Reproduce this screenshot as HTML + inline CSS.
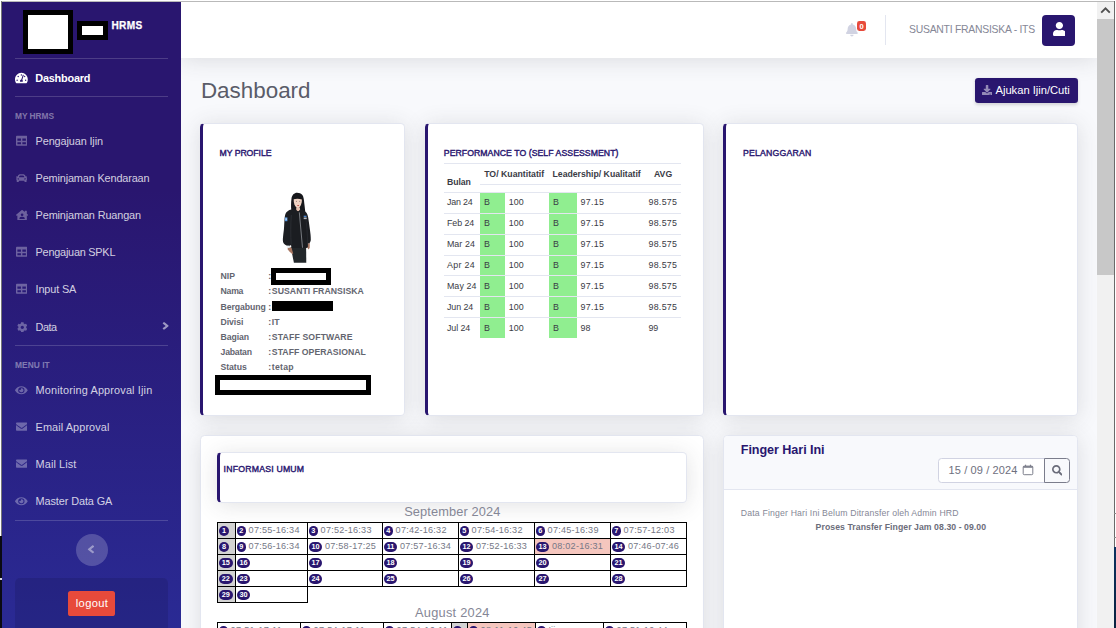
<!DOCTYPE html>
<html lang="id">
<head>
<meta charset="utf-8">
<title>Dashboard - HRMS</title>
<style>
*{box-sizing:border-box;margin:0;padding:0}
html,body{width:1116px;height:628px;overflow:hidden;background:#f8f9fc}
body{font-family:"Liberation Sans",sans-serif;color:#858796;position:relative;-webkit-font-smoothing:antialiased}
#page{position:absolute;left:0;top:0;width:1116px;height:628px;overflow:hidden;background:#f8f9fc}
.abs{position:absolute}
.t{position:absolute;white-space:nowrap;line-height:1}

/* ---------- sidebar ---------- */
#sidebar{position:absolute;left:2px;top:2px;width:179px;height:626px;background:linear-gradient(180deg,#29166f 0%,#29166f 30%,#2a2a94 100%)}
.sdiv{position:absolute;left:13px;width:153px;height:1px;background:rgba(255,255,255,.15)}
.shead{position:absolute;left:13px;font-size:8.3px;font-weight:bold;color:rgba(255,255,255,.4);letter-spacing:.1px;white-space:nowrap;line-height:1}
.nav{position:absolute;left:33.5px;font-size:10.9px;color:rgba(255,255,255,.8);white-space:nowrap;line-height:1}
.nav.act{color:#fff;font-weight:bold}
.ico{position:absolute;fill:rgba(255,255,255,.3)}

/* ---------- topbar ---------- */
#topbar{position:absolute;left:181px;top:2px;width:916px;height:56px;background:#fff;box-shadow:0 2.4px 22.4px 0 rgba(58,59,69,.15)}

/* ---------- cards ---------- */
.card{position:absolute;background:#fff;border:1px solid #e3e6f0;border-radius:4.5px;box-shadow:0 2.4px 22.4px 0 rgba(58,59,69,.15)}
.card.bl{border-left:3.4px solid #29166f}
.ctitle{position:absolute;font-size:8.96px;font-weight:bold;color:#29166f;white-space:nowrap;line-height:1}
</style>
</head>
<body>
<div id="page">

<!-- ======= MAIN CONTENT (placed first so sidebar/topbar overlay shadows) ======= -->
<div id="content">
<div class="t" style="left:200.90px;top:80.00px;font-size:22.4px;letter-spacing:0.012px;color:#5a5c69;">Dashboard</div>
<div class="abs" style="left:975px;top:78px;width:103px;height:25px;border-radius:3.2px;background:#29166f;box-shadow:0 1.6px 3.2px rgba(58,59,69,.2)"></div>
<svg class="abs" style="left:982.0px;top:85.0px" width="10.1" height="10.1" viewBox="0 0 512 512" preserveAspectRatio="none"><path fill="rgba(255,255,255,.5)" d="M216 0h80c13.3 0 24 10.7 24 24v168h87.7c17.8 0 26.7 21.5 14.1 34.1L269.7 378.3c-7.5 7.5-19.8 7.5-27.3 0L90.1 226.1c-12.6-12.6-3.7-34.1 14.1-34.1H192V24c0-13.3 10.7-24 24-24zm296 376v112c0 13.3-10.7 24-24 24H24c-13.3 0-24-10.7-24-24V376c0-13.3 10.7-24 24-24h146.7l49 49c20.1 20.1 52.5 20.1 72.6 0l49-49H488c13.3 0 24 10.7 24 24zm-124 88c0-11-9-20-20-20s-20 9-20 20 9 20 20 20 20-9 20-20zm64 0c0-11-9-20-20-20s-20 9-20 20 9 20 20 20 20-9 20-20z"/></svg>
<div class="t" style="left:995.50px;top:85.00px;font-size:11.2px;letter-spacing:-0.020px;color:#fff;">Ajukan Ijin/Cuti</div>
<div class="card bl" style="left:200px;top:123px;width:204.5px;height:292.5px"></div>
<div class="t" style="left:219.60px;top:149.00px;font-size:8.7px;letter-spacing:-0.067px;color:#29166f;-webkit-text-stroke:0.4px;">MY PROFILE</div>
<svg class="abs" style="left:276px;top:188px;filter:blur(.4px)" width="44" height="80" viewBox="276 188 44 80">
<path d="M297.1 192.7 C294.2 192.7 291.9 195 291.5 198.6 C291 202.4 290.9 207 291.3 210 C291.4 211.6 291.5 212.8 291.9 213.6 L305.4 213.6 C305.2 210.6 304.7 207 304.3 203.6 C304 199.6 303.6 196.8 302.4 195 C301.1 193.4 299.2 192.7 297.1 192.7 Z" fill="#16171b"/>
<path d="M293.7 199.3 C293.5 203.2 294.6 206.6 297.7 208.7 C300.5 207.1 302.1 203.4 301.9 199.5 C299.5 198.5 296 198.3 293.7 199.3 Z" fill="#efd2c3"/>
<path d="M296.3 207.4 L299.9 207.4 L300.2 211.2 L296.0 211.2 Z" fill="#e5bfad"/>
<ellipse cx="298.1" cy="205.4" rx="1.0" ry=".5" fill="#c0453f"/>
<circle cx="296.3" cy="201.3" r=".45" fill="#3a2a28"/><circle cx="299.8" cy="201.3" r=".45" fill="#3a2a28"/>
<path d="M290.8 247.2 L306.1 247.2 L306.3 262.7 L293.9 262.7 Z" fill="#22272a"/>
<path d="M287.6 247.4 C288.8 246.6 290.6 246.8 291.6 248 L293.2 253.4 L292.2 254 L289.6 251.8 L287.8 249.6 Z" fill="#a87762"/>
<path d="M307.4 243.4 L309.8 243.2 L309.7 248 L308.4 249.6 L307.3 247.2 Z" fill="#a87762"/>
<path d="M290.1 209.7 C291.8 209.0 294.4 209.0 296.0 209.6 L298.1 211.8 L300.1 209.6 C302.4 209.8 304.6 210.9 306.0 212.3 C307.2 213.6 307.8 215.4 308.2 217.6 C308.8 221.6 309.4 225.8 309.9 229.5 C310.4 233 310.9 236.6 310.8 240 C310.6 241.6 310.0 242.8 309.2 243.4 L307.9 243.2 L307.9 246.2 C307.9 247.2 307.3 247.8 306.4 247.9 L291.6 248 C291.2 247 291.1 245.8 291.0 244.8 L289.4 246.6 C287.6 246.2 285.4 245.2 284.0 243.8 C283.0 242.6 282.7 240.4 282.9 238.4 C283.1 235.4 283.5 232.4 283.9 229.5 C284.2 225.6 284.3 221.6 284.6 218.4 C284.9 215.8 285.4 213.8 286.2 212.6 C287.2 211.2 288.6 210.3 290.1 209.7 Z" fill="#1b1d21"/>
<path d="M299.3 212.3 L302.5 247.7" stroke="#8f9399" stroke-width=".8" fill="none"/>
<path d="M291.3 215 C290.6 224 290.6 236 291.2 244.6" stroke="#303339" stroke-width=".7" fill="none"/>
<path d="M305.6 216 C306.6 224 307.4 234 307.8 243" stroke="#2c2f35" stroke-width=".6" fill="none"/>
<rect x="284.9" y="217.4" width="2.5" height="3.8" fill="#5c9ae0"/>
<rect x="285.6" y="218.4" width="1.1" height="1.6" fill="#c9def5"/>
<rect x="303.7" y="215.7" width="2.8" height="1.2" fill="#4f8fdc"/>
<rect x="303.7" y="217.5" width="3.0" height="1.6" fill="#b4b9c4"/>
<rect x="286.9" y="245.6" width="2.9" height="2.3" fill="#e8f0f4"/>
</svg>
<div class="t" style="left:220.60px;top:272.00px;font-size:8.7px;color:#63656f;font-weight:bold;">NIP</div>
<div class="t" style="left:268.20px;top:272.00px;font-size:8.7px;color:#63656f;font-weight:bold;">:</div>
<div class="t" style="left:220.60px;top:287.00px;font-size:8.7px;letter-spacing:-0.267px;color:#63656f;font-weight:bold;">Nama</div>
<div class="t" style="left:268.20px;top:287.00px;font-size:8.7px;color:#63656f;font-weight:bold;">:</div>
<div class="t" style="left:271.80px;top:287.00px;font-size:8.7px;letter-spacing:0.050px;color:#63656f;font-weight:bold;">SUSANTI FRANSISKA</div>
<div class="t" style="left:220.60px;top:303.00px;font-size:8.7px;letter-spacing:-0.075px;color:#63656f;font-weight:bold;">Bergabung</div>
<div class="t" style="left:268.20px;top:303.00px;font-size:8.7px;color:#63656f;font-weight:bold;">:</div>
<div class="t" style="left:220.60px;top:318.00px;font-size:8.7px;letter-spacing:-0.080px;color:#63656f;font-weight:bold;">Divisi</div>
<div class="t" style="left:268.20px;top:318.00px;font-size:8.7px;color:#63656f;font-weight:bold;">:</div>
<div class="t" style="left:271.80px;top:318.00px;font-size:8.7px;color:#63656f;font-weight:bold;">IT</div>
<div class="t" style="left:220.60px;top:333.00px;font-size:8.7px;letter-spacing:-0.080px;color:#63656f;font-weight:bold;">Bagian</div>
<div class="t" style="left:268.20px;top:333.00px;font-size:8.7px;color:#63656f;font-weight:bold;">:</div>
<div class="t" style="left:271.80px;top:333.00px;font-size:8.7px;letter-spacing:0.138px;color:#63656f;font-weight:bold;">STAFF SOFTWARE</div>
<div class="t" style="left:220.60px;top:348.00px;font-size:8.7px;letter-spacing:-0.233px;color:#63656f;font-weight:bold;">Jabatan</div>
<div class="t" style="left:268.20px;top:348.00px;font-size:8.7px;color:#63656f;font-weight:bold;">:</div>
<div class="t" style="left:271.80px;top:348.00px;font-size:8.7px;letter-spacing:0.037px;color:#63656f;font-weight:bold;">STAFF OPERASIONAL</div>
<div class="t" style="left:220.60px;top:363.00px;font-size:8.7px;letter-spacing:-0.080px;color:#63656f;font-weight:bold;">Status</div>
<div class="t" style="left:268.20px;top:363.00px;font-size:8.7px;color:#63656f;font-weight:bold;">:</div>
<div class="t" style="left:271.80px;top:363.00px;font-size:8.7px;letter-spacing:0.250px;color:#63656f;font-weight:bold;">tetap</div>
<div class="abs" style="left:271px;top:268px;width:60px;height:16.7px;background:#000"></div>
<div class="abs" style="left:276px;top:273px;width:50px;height:6.8px;background:#fff"></div>
<div class="abs" style="left:271.8px;top:301.2px;width:61.2px;height:9.5px;background:#000"></div>
<div class="abs" style="left:215px;top:375.2px;width:156px;height:19.7px;background:#000"></div>
<div class="abs" style="left:220px;top:380px;width:146px;height:9.9px;background:#fff"></div>
<div class="card bl" style="left:425px;top:123px;width:278.5px;height:292.5px"></div>
<div class="t" style="left:443.80px;top:149.00px;font-size:8.7px;letter-spacing:0.052px;color:#29166f;-webkit-text-stroke:0.4px;">PERFORMANCE TO (SELF ASSESSMENT)</div>
<div class="abs" style="left:444px;top:163px;width:236.8px;height:1px;background:#e3e6f0"></div>
<div class="abs" style="left:479.8px;top:184px;width:201px;height:1px;background:#e3e6f0"></div>
<div class="t" style="left:484.20px;top:170.00px;font-size:8.7px;letter-spacing:0.021px;color:#3a3b45;font-weight:bold;">TO/ Kuantitatif</div>
<div class="t" style="left:552.50px;top:170.00px;font-size:8.7px;letter-spacing:-0.005px;color:#3a3b45;font-weight:bold;">Leadership/ Kualitatif</div>
<div class="t" style="left:653.90px;top:170.00px;font-size:8.7px;letter-spacing:0.050px;color:#3a3b45;font-weight:bold;">AVG</div>
<div class="t" style="left:447.00px;top:178.00px;font-size:8.7px;letter-spacing:-0.075px;color:#3a3b45;font-weight:bold;">Bulan</div>
<div class="abs" style="left:444px;top:192px;width:236.8px;height:1px;background:#e3e6f0"></div>
<div class="abs" style="left:479.8px;top:193px;width:25px;height:20px;background:#90ee90"></div>
<div class="abs" style="left:548.9px;top:193px;width:28.1px;height:20px;background:#90ee90"></div>
<div class="t" style="left:446.90px;top:198.00px;font-size:8.9px;letter-spacing:-0.180px;color:#3a3b45;">Jan 24</div>
<div class="t" style="left:484.10px;top:198.00px;font-size:8.9px;color:#3a3b45;">B</div>
<div class="t" style="left:508.80px;top:198.00px;font-size:8.9px;letter-spacing:0.050px;color:#3a3b45;">100</div>
<div class="t" style="left:552.90px;top:198.00px;font-size:8.9px;color:#3a3b45;">B</div>
<div class="t" style="left:580.50px;top:198.00px;font-size:8.9px;letter-spacing:0.300px;color:#3a3b45;">97.15</div>
<div class="t" style="left:648.40px;top:198.00px;font-size:8.9px;letter-spacing:0.300px;color:#3a3b45;">98.575</div>
<div class="abs" style="left:444px;top:213px;width:236.8px;height:1px;background:#e3e6f0"></div>
<div class="abs" style="left:479.8px;top:214px;width:25px;height:20px;background:#90ee90"></div>
<div class="abs" style="left:548.9px;top:214px;width:28.1px;height:20px;background:#90ee90"></div>
<div class="t" style="left:446.90px;top:219.00px;font-size:8.9px;letter-spacing:-0.060px;color:#3a3b45;">Feb 24</div>
<div class="t" style="left:484.10px;top:219.00px;font-size:8.9px;color:#3a3b45;">B</div>
<div class="t" style="left:508.80px;top:219.00px;font-size:8.9px;letter-spacing:0.050px;color:#3a3b45;">100</div>
<div class="t" style="left:552.90px;top:219.00px;font-size:8.9px;color:#3a3b45;">B</div>
<div class="t" style="left:580.50px;top:219.00px;font-size:8.9px;letter-spacing:0.300px;color:#3a3b45;">97.15</div>
<div class="t" style="left:648.40px;top:219.00px;font-size:8.9px;letter-spacing:0.300px;color:#3a3b45;">98.575</div>
<div class="abs" style="left:444px;top:234px;width:236.8px;height:1px;background:#e3e6f0"></div>
<div class="abs" style="left:479.8px;top:235px;width:25px;height:20px;background:#90ee90"></div>
<div class="abs" style="left:548.9px;top:235px;width:28.1px;height:20px;background:#90ee90"></div>
<div class="t" style="left:446.90px;top:240.00px;font-size:8.9px;letter-spacing:0.060px;color:#3a3b45;">Mar 24</div>
<div class="t" style="left:484.10px;top:240.00px;font-size:8.9px;color:#3a3b45;">B</div>
<div class="t" style="left:508.80px;top:240.00px;font-size:8.9px;letter-spacing:0.050px;color:#3a3b45;">100</div>
<div class="t" style="left:552.90px;top:240.00px;font-size:8.9px;color:#3a3b45;">B</div>
<div class="t" style="left:580.50px;top:240.00px;font-size:8.9px;letter-spacing:0.300px;color:#3a3b45;">97.15</div>
<div class="t" style="left:648.40px;top:240.00px;font-size:8.9px;letter-spacing:0.300px;color:#3a3b45;">98.575</div>
<div class="abs" style="left:444px;top:255px;width:236.8px;height:1px;background:#e3e6f0"></div>
<div class="abs" style="left:479.8px;top:256px;width:25px;height:19px;background:#90ee90"></div>
<div class="abs" style="left:548.9px;top:256px;width:28.1px;height:19px;background:#90ee90"></div>
<div class="t" style="left:446.90px;top:261.00px;font-size:8.9px;letter-spacing:0.340px;color:#3a3b45;">Apr 24</div>
<div class="t" style="left:484.10px;top:261.00px;font-size:8.9px;color:#3a3b45;">B</div>
<div class="t" style="left:508.80px;top:261.00px;font-size:8.9px;letter-spacing:0.050px;color:#3a3b45;">100</div>
<div class="t" style="left:552.90px;top:261.00px;font-size:8.9px;color:#3a3b45;">B</div>
<div class="t" style="left:580.50px;top:261.00px;font-size:8.9px;letter-spacing:0.300px;color:#3a3b45;">97.15</div>
<div class="t" style="left:648.40px;top:261.00px;font-size:8.9px;letter-spacing:0.300px;color:#3a3b45;">98.575</div>
<div class="abs" style="left:444px;top:275px;width:236.8px;height:1px;background:#e3e6f0"></div>
<div class="abs" style="left:479.8px;top:276px;width:25px;height:20px;background:#90ee90"></div>
<div class="abs" style="left:548.9px;top:276px;width:28.1px;height:20px;background:#90ee90"></div>
<div class="t" style="left:446.90px;top:282.00px;font-size:8.9px;letter-spacing:0.080px;color:#3a3b45;">May 24</div>
<div class="t" style="left:484.10px;top:282.00px;font-size:8.9px;color:#3a3b45;">B</div>
<div class="t" style="left:508.80px;top:282.00px;font-size:8.9px;letter-spacing:0.050px;color:#3a3b45;">100</div>
<div class="t" style="left:552.90px;top:282.00px;font-size:8.9px;color:#3a3b45;">B</div>
<div class="t" style="left:580.50px;top:282.00px;font-size:8.9px;letter-spacing:0.300px;color:#3a3b45;">97.15</div>
<div class="t" style="left:648.40px;top:282.00px;font-size:8.9px;letter-spacing:0.300px;color:#3a3b45;">98.575</div>
<div class="abs" style="left:444px;top:296px;width:236.8px;height:1px;background:#e3e6f0"></div>
<div class="abs" style="left:479.8px;top:297px;width:25px;height:20px;background:#90ee90"></div>
<div class="abs" style="left:548.9px;top:297px;width:28.1px;height:20px;background:#90ee90"></div>
<div class="t" style="left:446.90px;top:303.00px;font-size:8.9px;letter-spacing:-0.060px;color:#3a3b45;">Jun 24</div>
<div class="t" style="left:484.10px;top:303.00px;font-size:8.9px;color:#3a3b45;">B</div>
<div class="t" style="left:508.80px;top:303.00px;font-size:8.9px;letter-spacing:0.050px;color:#3a3b45;">100</div>
<div class="t" style="left:552.90px;top:303.00px;font-size:8.9px;color:#3a3b45;">B</div>
<div class="t" style="left:580.50px;top:303.00px;font-size:8.9px;letter-spacing:0.300px;color:#3a3b45;">97.15</div>
<div class="t" style="left:648.40px;top:303.00px;font-size:8.9px;letter-spacing:0.300px;color:#3a3b45;">98.575</div>
<div class="abs" style="left:444px;top:317px;width:236.8px;height:1px;background:#e3e6f0"></div>
<div class="abs" style="left:479.8px;top:318px;width:25px;height:20px;background:#90ee90"></div>
<div class="abs" style="left:548.9px;top:318px;width:28.1px;height:20px;background:#90ee90"></div>
<div class="t" style="left:446.90px;top:324.00px;font-size:8.9px;letter-spacing:-0.060px;color:#3a3b45;">Jul 24</div>
<div class="t" style="left:484.10px;top:324.00px;font-size:8.9px;color:#3a3b45;">B</div>
<div class="t" style="left:508.80px;top:324.00px;font-size:8.9px;letter-spacing:0.050px;color:#3a3b45;">100</div>
<div class="t" style="left:552.90px;top:324.00px;font-size:8.9px;color:#3a3b45;">B</div>
<div class="t" style="left:580.50px;top:324.00px;font-size:8.9px;color:#3a3b45;">98</div>
<div class="t" style="left:648.40px;top:324.00px;font-size:8.9px;color:#3a3b45;">99</div>
<div class="card bl" style="left:723px;top:123px;width:354.5px;height:292.5px"></div>
<div class="t" style="left:742.90px;top:149.00px;font-size:8.7px;letter-spacing:0.220px;color:#29166f;-webkit-text-stroke:0.4px;">PELANGGARAN</div>
<div class="card" style="left:200px;top:435px;width:503.5px;height:260px"></div>
<div class="card bl" style="left:217px;top:452px;width:469.5px;height:51px"></div>
<div class="t" style="left:223.60px;top:465.00px;font-size:8.7px;letter-spacing:0.215px;color:#29166f;-webkit-text-stroke:0.4px;">INFORMASI UMUM</div>
<div class="t" style="left:404.20px;top:506.00px;font-size:12.8px;letter-spacing:0.115px;color:#858796;">September 2024</div>
<div class="t" style="left:415.00px;top:607.00px;font-size:12.8px;letter-spacing:0.260px;color:#858796;">August 2024</div>
<div class="abs" style="left:218px;top:523px;width:17px;height:15px;background:#d3d3d3"></div>
<div class="abs" style="left:218px;top:539px;width:17px;height:15px;background:#d3d3d3"></div>
<div class="abs" style="left:218px;top:555px;width:17px;height:15px;background:#d3d3d3"></div>
<div class="abs" style="left:218px;top:571px;width:17px;height:15px;background:#d3d3d3"></div>
<div class="abs" style="left:218px;top:587px;width:17px;height:15px;background:#d3d3d3"></div>
<div class="abs" style="left:535px;top:539px;width:75px;height:15px;background:#f5c6be"></div>
<div class="abs" style="left:217px;top:522px;width:470px;height:1px;background:#000"></div>
<div class="abs" style="left:217px;top:538px;width:470px;height:1px;background:#000"></div>
<div class="abs" style="left:217px;top:554px;width:470px;height:1px;background:#000"></div>
<div class="abs" style="left:217px;top:570px;width:470px;height:1px;background:#000"></div>
<div class="abs" style="left:217px;top:586px;width:470px;height:1px;background:#000"></div>
<div class="abs" style="left:217px;top:602px;width:91px;height:1px;background:#000"></div>
<div class="abs" style="left:217px;top:522px;width:1px;height:81px;background:#000"></div>
<div class="abs" style="left:235px;top:522px;width:1px;height:81px;background:#000"></div>
<div class="abs" style="left:307px;top:522px;width:1px;height:81px;background:#000"></div>
<div class="abs" style="left:382px;top:522px;width:1px;height:65px;background:#000"></div>
<div class="abs" style="left:458px;top:522px;width:1px;height:65px;background:#000"></div>
<div class="abs" style="left:534px;top:522px;width:1px;height:65px;background:#000"></div>
<div class="abs" style="left:610px;top:522px;width:1px;height:65px;background:#000"></div>
<div class="abs" style="left:686px;top:522px;width:1px;height:65px;background:#000"></div>
<div class="abs" style="left:218.80px;top:525.80px;width:10.4px;height:10.2px;border-radius:5.1px;background:#29166f"></div><div class="t" style="left:221.97px;top:527.00px;font-size:7.3px;color:#fff;font-weight:bold;">1</div>
<div class="abs" style="left:236.90px;top:525.80px;width:8.9px;height:10.2px;border-radius:5.1px;background:#29166f"></div><div class="t" style="left:239.32px;top:527.00px;font-size:7.3px;color:#fff;font-weight:bold;">2</div>
<div class="t" style="left:248.60px;top:526.00px;font-size:9.1px;letter-spacing:0.230px;color:#757786;">07:55-16:34</div>
<div class="abs" style="left:308.90px;top:525.80px;width:8.9px;height:10.2px;border-radius:5.1px;background:#29166f"></div><div class="t" style="left:311.32px;top:527.00px;font-size:7.3px;color:#fff;font-weight:bold;">3</div>
<div class="t" style="left:320.60px;top:526.00px;font-size:9.1px;letter-spacing:0.230px;color:#757786;">07:52-16:33</div>
<div class="abs" style="left:383.90px;top:525.80px;width:8.9px;height:10.2px;border-radius:5.1px;background:#29166f"></div><div class="t" style="left:386.32px;top:527.00px;font-size:7.3px;color:#fff;font-weight:bold;">4</div>
<div class="t" style="left:395.60px;top:526.00px;font-size:9.1px;letter-spacing:0.230px;color:#757786;">07:42-16:32</div>
<div class="abs" style="left:459.90px;top:525.80px;width:8.9px;height:10.2px;border-radius:5.1px;background:#29166f"></div><div class="t" style="left:462.32px;top:527.00px;font-size:7.3px;color:#fff;font-weight:bold;">5</div>
<div class="t" style="left:471.60px;top:526.00px;font-size:9.1px;letter-spacing:0.230px;color:#757786;">07:54-16:32</div>
<div class="abs" style="left:535.90px;top:525.80px;width:8.9px;height:10.2px;border-radius:5.1px;background:#29166f"></div><div class="t" style="left:538.32px;top:527.00px;font-size:7.3px;color:#fff;font-weight:bold;">6</div>
<div class="t" style="left:547.60px;top:526.00px;font-size:9.1px;letter-spacing:0.230px;color:#757786;">07:45-16:39</div>
<div class="abs" style="left:611.90px;top:525.80px;width:8.9px;height:10.2px;border-radius:5.1px;background:#29166f"></div><div class="t" style="left:614.32px;top:527.00px;font-size:7.3px;color:#fff;font-weight:bold;">7</div>
<div class="t" style="left:623.60px;top:526.00px;font-size:9.1px;letter-spacing:0.230px;color:#757786;">07:57-12:03</div>
<div class="abs" style="left:218.80px;top:541.80px;width:10.4px;height:10.2px;border-radius:5.1px;background:#29166f"></div><div class="t" style="left:221.97px;top:543.00px;font-size:7.3px;color:#fff;font-weight:bold;">8</div>
<div class="abs" style="left:236.90px;top:541.80px;width:8.9px;height:10.2px;border-radius:5.1px;background:#29166f"></div><div class="t" style="left:239.32px;top:543.00px;font-size:7.3px;color:#fff;font-weight:bold;">9</div>
<div class="t" style="left:248.60px;top:542.00px;font-size:9.1px;letter-spacing:0.230px;color:#757786;">07:56-16:34</div>
<div class="abs" style="left:308.90px;top:541.80px;width:13.3px;height:10.2px;border-radius:5.1px;background:#29166f"></div><div class="t" style="left:311.61px;top:543.00px;font-size:7.3px;color:#fff;font-weight:bold;letter-spacing:-0.25px;">10</div>
<div class="t" style="left:325.00px;top:542.00px;font-size:9.1px;letter-spacing:0.230px;color:#757786;">07:58-17:25</div>
<div class="abs" style="left:383.90px;top:541.80px;width:13.3px;height:10.2px;border-radius:5.1px;background:#29166f"></div><div class="t" style="left:386.82px;top:543.00px;font-size:7.3px;color:#fff;font-weight:bold;letter-spacing:-0.25px;">11</div>
<div class="t" style="left:400.00px;top:542.00px;font-size:9.1px;letter-spacing:0.230px;color:#757786;">07:57-16:34</div>
<div class="abs" style="left:459.90px;top:541.80px;width:13.3px;height:10.2px;border-radius:5.1px;background:#29166f"></div><div class="t" style="left:462.61px;top:543.00px;font-size:7.3px;color:#fff;font-weight:bold;letter-spacing:-0.25px;">12</div>
<div class="t" style="left:476.00px;top:542.00px;font-size:9.1px;letter-spacing:0.230px;color:#757786;">07:52-16:33</div>
<div class="abs" style="left:535.90px;top:541.80px;width:13.3px;height:10.2px;border-radius:5.1px;background:#29166f"></div><div class="t" style="left:538.61px;top:543.00px;font-size:7.3px;color:#fff;font-weight:bold;letter-spacing:-0.25px;">13</div>
<div class="t" style="left:552.00px;top:542.00px;font-size:9.1px;letter-spacing:0.230px;color:#757786;">08:02-16:31</div>
<div class="abs" style="left:611.90px;top:541.80px;width:13.3px;height:10.2px;border-radius:5.1px;background:#29166f"></div><div class="t" style="left:614.61px;top:543.00px;font-size:7.3px;color:#fff;font-weight:bold;letter-spacing:-0.25px;">14</div>
<div class="t" style="left:628.00px;top:542.00px;font-size:9.1px;letter-spacing:0.230px;color:#757786;">07:46-07:46</div>
<div class="abs" style="left:218.80px;top:557.80px;width:14.0px;height:10.2px;border-radius:5.1px;background:#29166f"></div><div class="t" style="left:221.86px;top:559.00px;font-size:7.3px;color:#fff;font-weight:bold;letter-spacing:-0.25px;">15</div>
<div class="abs" style="left:236.90px;top:557.80px;width:13.3px;height:10.2px;border-radius:5.1px;background:#29166f"></div><div class="t" style="left:239.61px;top:559.00px;font-size:7.3px;color:#fff;font-weight:bold;letter-spacing:-0.25px;">16</div>
<div class="abs" style="left:308.90px;top:557.80px;width:13.3px;height:10.2px;border-radius:5.1px;background:#29166f"></div><div class="t" style="left:311.61px;top:559.00px;font-size:7.3px;color:#fff;font-weight:bold;letter-spacing:-0.25px;">17</div>
<div class="abs" style="left:383.90px;top:557.80px;width:13.3px;height:10.2px;border-radius:5.1px;background:#29166f"></div><div class="t" style="left:386.61px;top:559.00px;font-size:7.3px;color:#fff;font-weight:bold;letter-spacing:-0.25px;">18</div>
<div class="abs" style="left:459.90px;top:557.80px;width:13.3px;height:10.2px;border-radius:5.1px;background:#29166f"></div><div class="t" style="left:462.61px;top:559.00px;font-size:7.3px;color:#fff;font-weight:bold;letter-spacing:-0.25px;">19</div>
<div class="abs" style="left:535.90px;top:557.80px;width:13.3px;height:10.2px;border-radius:5.1px;background:#29166f"></div><div class="t" style="left:538.61px;top:559.00px;font-size:7.3px;color:#fff;font-weight:bold;letter-spacing:-0.25px;">20</div>
<div class="abs" style="left:611.90px;top:557.80px;width:13.3px;height:10.2px;border-radius:5.1px;background:#29166f"></div><div class="t" style="left:614.61px;top:559.00px;font-size:7.3px;color:#fff;font-weight:bold;letter-spacing:-0.25px;">21</div>
<div class="abs" style="left:218.80px;top:573.80px;width:14.0px;height:10.2px;border-radius:5.1px;background:#29166f"></div><div class="t" style="left:221.86px;top:575.00px;font-size:7.3px;color:#fff;font-weight:bold;letter-spacing:-0.25px;">22</div>
<div class="abs" style="left:236.90px;top:573.80px;width:13.3px;height:10.2px;border-radius:5.1px;background:#29166f"></div><div class="t" style="left:239.61px;top:575.00px;font-size:7.3px;color:#fff;font-weight:bold;letter-spacing:-0.25px;">23</div>
<div class="abs" style="left:308.90px;top:573.80px;width:13.3px;height:10.2px;border-radius:5.1px;background:#29166f"></div><div class="t" style="left:311.61px;top:575.00px;font-size:7.3px;color:#fff;font-weight:bold;letter-spacing:-0.25px;">24</div>
<div class="abs" style="left:383.90px;top:573.80px;width:13.3px;height:10.2px;border-radius:5.1px;background:#29166f"></div><div class="t" style="left:386.61px;top:575.00px;font-size:7.3px;color:#fff;font-weight:bold;letter-spacing:-0.25px;">25</div>
<div class="abs" style="left:459.90px;top:573.80px;width:13.3px;height:10.2px;border-radius:5.1px;background:#29166f"></div><div class="t" style="left:462.61px;top:575.00px;font-size:7.3px;color:#fff;font-weight:bold;letter-spacing:-0.25px;">26</div>
<div class="abs" style="left:535.90px;top:573.80px;width:13.3px;height:10.2px;border-radius:5.1px;background:#29166f"></div><div class="t" style="left:538.61px;top:575.00px;font-size:7.3px;color:#fff;font-weight:bold;letter-spacing:-0.25px;">27</div>
<div class="abs" style="left:611.90px;top:573.80px;width:13.3px;height:10.2px;border-radius:5.1px;background:#29166f"></div><div class="t" style="left:614.61px;top:575.00px;font-size:7.3px;color:#fff;font-weight:bold;letter-spacing:-0.25px;">28</div>
<div class="abs" style="left:218.80px;top:589.80px;width:14.0px;height:10.2px;border-radius:5.1px;background:#29166f"></div><div class="t" style="left:221.86px;top:591.00px;font-size:7.3px;color:#fff;font-weight:bold;letter-spacing:-0.25px;">29</div>
<div class="abs" style="left:236.90px;top:589.80px;width:13.3px;height:10.2px;border-radius:5.1px;background:#29166f"></div><div class="t" style="left:239.61px;top:591.00px;font-size:7.3px;color:#fff;font-weight:bold;letter-spacing:-0.25px;">30</div>
<div class="abs" style="left:452px;top:623px;width:15px;height:8px;background:#d3d3d3"></div>
<div class="abs" style="left:468px;top:623px;width:67px;height:8px;background:#f5c6be"></div>
<div class="abs" style="left:217px;top:622px;width:470px;height:1px;background:#000"></div>
<div class="abs" style="left:217px;top:622px;width:1px;height:8px;background:#000"></div>
<div class="abs" style="left:300px;top:622px;width:1px;height:8px;background:#000"></div>
<div class="abs" style="left:383px;top:622px;width:1px;height:8px;background:#000"></div>
<div class="abs" style="left:451px;top:622px;width:1px;height:8px;background:#000"></div>
<div class="abs" style="left:467px;top:622px;width:1px;height:8px;background:#000"></div>
<div class="abs" style="left:535px;top:622px;width:1px;height:8px;background:#000"></div>
<div class="abs" style="left:603px;top:622px;width:1px;height:8px;background:#000"></div>
<div class="abs" style="left:686px;top:622px;width:1px;height:8px;background:#000"></div>
<div class="abs" style="left:218.90px;top:625.80px;width:8.9px;height:10.2px;border-radius:5.1px;background:#29166f"></div><div class="t" style="left:221.32px;top:627.00px;font-size:7.3px;color:#fff;font-weight:bold;">1</div>
<div class="t" style="left:230.60px;top:626.00px;font-size:9.1px;letter-spacing:0.330px;color:#757786;">07:51-17:11</div>
<div class="abs" style="left:301.90px;top:625.80px;width:8.9px;height:10.2px;border-radius:5.1px;background:#29166f"></div><div class="t" style="left:304.32px;top:627.00px;font-size:7.3px;color:#fff;font-weight:bold;">2</div>
<div class="t" style="left:313.60px;top:626.00px;font-size:9.1px;letter-spacing:0.330px;color:#757786;">07:54-17:11</div>
<div class="abs" style="left:384.90px;top:625.80px;width:8.9px;height:10.2px;border-radius:5.1px;background:#29166f"></div><div class="t" style="left:387.32px;top:627.00px;font-size:7.3px;color:#fff;font-weight:bold;">3</div>
<div class="t" style="left:396.60px;top:626.00px;font-size:9.1px;letter-spacing:0.330px;color:#757786;">07:54-16:11</div>
<div class="abs" style="left:452.90px;top:625.80px;width:8.9px;height:10.2px;border-radius:5.1px;background:#29166f"></div><div class="t" style="left:455.32px;top:627.00px;font-size:7.3px;color:#fff;font-weight:bold;">4</div>
<div class="abs" style="left:468.90px;top:625.80px;width:8.9px;height:10.2px;border-radius:5.1px;background:#29166f"></div><div class="t" style="left:471.32px;top:627.00px;font-size:7.3px;color:#fff;font-weight:bold;">5</div>
<div class="t" style="left:480.60px;top:626.00px;font-size:9.1px;letter-spacing:0.330px;color:#757786;">08:11-16:45</div>
<div class="abs" style="left:536.90px;top:625.80px;width:8.9px;height:10.2px;border-radius:5.1px;background:#29166f"></div><div class="t" style="left:539.32px;top:627.00px;font-size:7.3px;color:#fff;font-weight:bold;">6</div>
<div class="t" style="left:548.60px;top:626.00px;font-size:9.1px;color:#757786;">Ijin</div>
<div class="abs" style="left:604.90px;top:625.80px;width:8.9px;height:10.2px;border-radius:5.1px;background:#29166f"></div><div class="t" style="left:607.32px;top:627.00px;font-size:7.3px;color:#fff;font-weight:bold;">7</div>
<div class="t" style="left:616.60px;top:626.00px;font-size:9.1px;letter-spacing:0.230px;color:#757786;">07:51-16:44</div>
<div class="card" style="left:723px;top:435px;width:354.5px;height:260px;overflow:hidden"><div style="height:54px;background:#f8f9fc;border-bottom:1px solid #e3e6f0"></div></div>
<div class="t" style="left:740.80px;top:444.00px;font-size:12.6px;letter-spacing:-0.064px;color:#29166f;font-weight:bold;">Finger Hari Ini</div>
<div class="abs" style="left:937.8px;top:458.4px;width:106.9px;height:24.3px;background:#fff;border:1px solid #d1d3e2;border-radius:3.5px 0 0 3.5px"></div>
<div class="t" style="left:948.60px;top:465.00px;font-size:11.0px;letter-spacing:0.108px;color:#6e707e;">15 / 09 / 2024</div>
<svg class="abs" style="left:1021.5px;top:463.5px" width="12" height="12" viewBox="0 0 12 12"><rect x="1.2" y="2.1" width="9.6" height="8.6" rx="1" fill="none" stroke="#7d7f8c" stroke-width="1"/><rect x="1.2" y="2.1" width="9.6" height="1.7" fill="#7d7f8c"/><rect x="3" y=".7" width="1.1" height="1.8" fill="#7d7f8c"/><rect x="7.9" y=".7" width="1.1" height="1.8" fill="#7d7f8c"/></svg>
<div class="abs" style="left:1044.4px;top:458.4px;width:25.4px;height:24.3px;background:#f8f9fc;border:1px solid #7b7d8c;border-radius:0 3.5px 3.5px 0"></div>
<svg class="abs" style="left:1051.9px;top:465.0px" width="10.6" height="10.6" viewBox="0 0 512 512" preserveAspectRatio="none"><path fill="#6a6c7a" d="M505 442.7L405.3 343c-4.5-4.5-10.6-7-17-7H372c27.6-35.3 44-79.7 44-128C416 93.1 322.9 0 208 0S0 93.1 0 208s93.1 208 208 208c48.3 0 92.7-16.4 128-44v16.3c0 6.4 2.5 12.5 7 17l99.700 99.700c9.400 9.400 24.600 9.400 33.900 0l28.300-28.300c9.400-9.400 9.400-24.600.1-34zM208 336c-70.700 0-128-57.200-128-128 0-70.700 57.200-128 128-128 70.700 0 128 57.200 128 128 0 70.700-57.200 128-128 128z"/></svg>
<div class="t" style="left:740.80px;top:509.00px;font-size:8.7px;letter-spacing:0.171px;color:#858796;">Data Finger Hari Ini Belum Ditransfer oleh Admin HRD</div>
<div class="t" style="left:815.60px;top:523.00px;font-size:8.7px;letter-spacing:0.062px;color:#6b6d7a;font-weight:bold;">Proses Transfer Finger Jam 08.30 - 09.00</div>
</div>

<!-- ======= TOPBAR ======= -->
<div id="topbar"></div>
<svg class="abs" style="left:846.0px;top:23.3px" width="11.8" height="13.5" viewBox="0 0 448 512" preserveAspectRatio="none"><path fill="#d1d3e2" d="M224 512c35.32 0 63.97-28.65 63.97-64H160.03c0 35.35 28.65 64 63.97 64zm215.39-149.71c-19.32-20.76-55.47-51.99-55.47-154.29 0-77.7-54.48-139.9-127.94-155.16V32c0-17.67-14.32-32-31.98-32s-31.98 14.33-31.98 32v20.84C118.56 68.1 64.08 130.3 64.08 208c0 102.3-36.15 133.53-55.47 154.29-6 6.45-8.66 14.16-8.61 21.71.11 16.4 12.98 32 32.1 32h383.8c19.12 0 32-15.6 32.1-32 .05-7.55-2.61-15.27-8.61-21.71z"/></svg>
<div class="abs" style="left:857.2px;top:20.8px;width:9px;height:10px;border-radius:2.4px;background:#e74a3b"></div>
<div class="t" style="left:859.60px;top:23.00px;font-size:7.6px;color:#fff;font-weight:bold;">0</div>
<div class="abs" style="left:885px;top:15px;width:1px;height:30px;background:#e3e6f0"></div>
<div class="t" style="left:909.10px;top:25.00px;font-size:10.4px;letter-spacing:-0.255px;color:#858796;">SUSANTI FRANSISKA - ITS</div>
<div class="abs" style="left:1042px;top:15px;width:33px;height:30.5px;border-radius:4px;background:#29166f"></div>
<svg class="abs" style="left:1052.5px;top:22.3px" width="12.8" height="14.1" viewBox="0 0 448 512" preserveAspectRatio="none"><path fill="#fff" d="M224 256c70.7 0 128-57.3 128-128S294.7 0 224 0 96 57.3 96 128s57.3 128 128 128zm89.6 32h-16.7c-22.2 10.2-46.9 16-72.9 16s-50.6-5.8-72.9-16h-16.7C60.2 288 0 348.2 0 422.4V464c0 26.5 21.5 48 48 48h352c26.5 0 48-21.5 48-48v-41.6c0-74.2-60.2-134.4-134.4-134.4z"/></svg>

<!-- ======= SIDEBAR ======= -->
<div id="sidebar"></div>
<div class="abs" style="left:23px;top:10px;width:50px;height:44px;background:#000"></div>
<div class="abs" style="left:28px;top:15px;width:40px;height:34px;background:#fff"></div>
<div class="abs" style="left:77px;top:21px;width:31px;height:19px;background:#000"></div>
<div class="abs" style="left:82px;top:26px;width:21px;height:9px;background:#fff"></div>
<div class="t" style="left:111.50px;top:21.00px;font-size:10.1px;letter-spacing:0.333px;color:#fff;font-weight:bold;-webkit-text-stroke:0.25px;">HRMS</div>
<div class="abs" style="left:15px;top:58px;width:153px;height:1px;background:rgba(255,255,255,.17)"></div>
<div class="abs" style="left:15px;top:96px;width:153px;height:1px;background:rgba(255,255,255,.17)"></div>
<div class="abs" style="left:15px;top:345px;width:153px;height:1px;background:rgba(255,255,255,.17)"></div>
<div class="abs" style="left:15px;top:520px;width:153px;height:1px;background:rgba(255,255,255,.17)"></div>
<svg class="abs" style="left:15.2px;top:71.96px" width="12.8" height="11.9" viewBox="0 0 576 512" preserveAspectRatio="none"><path fill="#fff" d="M288 32C128.94 32 0 160.94 0 320c0 52.8 14.25 102.26 39.06 144.8 5.61 9.62 16.3 15.2 27.44 15.2h443c11.14 0 21.83-5.58 27.44-15.2C561.75 422.26 576 372.8 576 320c0-159.06-128.94-288-288-288zm0 64c14.71 0 26.58 10.13 30.32 23.65-1.11 2.26-2.64 4.23-3.45 6.67l-9.22 27.67c-5.13 3.49-10.97 6.01-17.64 6.01-17.67 0-32-14.33-32-32S270.33 96 288 96zM96 384c-17.67 0-32-14.33-32-32s14.33-32 32-32 32 14.33 32 32-14.33 32-32 32zm48-160c-17.67 0-32-14.33-32-32s14.33-32 32-32 32 14.33 32 32-14.33 32-32 32zm246.77-72.41l-61.33 184C343.13 347.33 352 364.54 352 384c0 11.72-3.38 22.55-8.88 32H232.88c-5.5-9.45-8.88-20.28-8.88-32 0-33.94 26.5-61.43 59.9-63.59l61.34-184.01c4.17-12.56 17.73-19.45 30.36-15.17 12.57 4.19 19.35 17.79 15.17 30.36zm14.66 57.2l15.52-46.55c3.47-1.29 7.13-2.23 11.05-2.23 17.67 0 32 14.33 32 32s-14.33 32-32 32c-11.38-.01-20.89-6.28-26.57-15.22zM480 384c-17.67 0-32-14.33-32-32s14.33-32 32-32 32 14.33 32 32-14.33 32-32 32z"/></svg>
<div class="t" style="left:35.30px;top:73.00px;font-size:10.9px;letter-spacing:-0.225px;color:#fff;font-weight:bold;">Dashboard</div>
<div class="t" style="left:15.00px;top:112.00px;font-size:8.4px;letter-spacing:-0.050px;color:rgba(255,255,255,.42);font-weight:bold;">MY HRMS</div>
<div class="t" style="left:15.00px;top:361.00px;font-size:8.4px;letter-spacing:0.033px;color:rgba(255,255,255,.42);font-weight:bold;">MENU IT</div>
<svg class="abs" style="left:16.2px;top:135.3px" width="11.3" height="11.43" viewBox="0 0 512 512" preserveAspectRatio="none"><path fill="rgba(255,255,255,.32)" d="M464 32H48C21.49 32 0 53.49 0 80v352c0 26.51 21.49 48 48 48h416c26.51 0 48-21.49 48-48V80c0-26.51-21.49-48-48-48zM224 416H64v-96h160v96zm0-160H64v-96h160v96zm224 160H288v-96h160v96zm0-160H288v-96h160v96z"/></svg>
<div class="t" style="left:35.60px;top:136.00px;font-size:10.9px;letter-spacing:-0.123px;color:rgba(255,255,255,.8);">Pengajuan Ijin</div>
<svg class="abs" style="left:16.2px;top:172.9px" width="11.3" height="10.4" viewBox="0 0 512 512" preserveAspectRatio="none"><path fill="rgba(255,255,255,.32)" d="M499.99 176h-59.87l-16.64-41.6C406.38 91.63 365.57 64 319.5 64h-127c-46.06 0-86.88 27.63-103.99 70.4L71.87 176H12.01C4.2 176-1.53 183.34.37 190.91l6 24C7.7 220.25 12.5 224 18.01 224h20.07C24.65 235.73 16 252.78 16 272v48c0 16.12 6.16 30.67 16 41.93V416c0 17.67 14.33 32 32 32h32c17.67 0 32-14.33 32-32v-32h256v32c0 17.67 14.33 32 32 32h32c17.67 0 32-14.33 32-32v-54.07c9.84-11.25 16-25.8 16-41.93v-48c0-19.22-8.65-36.27-22.07-48H494c5.51 0 10.31-3.75 11.64-9.09l6-24c1.89-7.57-3.84-14.91-11.65-14.91zm-352.06-17.83c7.29-18.22 24.94-30.17 44.57-30.17h127c19.63 0 37.28 11.95 44.57 30.17L384 208H128l19.93-49.83zM96 319.8c-19.2 0-32-12.76-32-31.9S76.8 256 96 256s48 28.71 48 47.85-28.8 15.95-48 15.95zm320 0c-19.2 0-48 3.19-48-15.95S396.8 256 416 256s32 12.76 32 31.9-12.8 31.9-32 31.9z"/></svg>
<div class="t" style="left:35.60px;top:173.00px;font-size:10.9px;letter-spacing:-0.153px;color:rgba(255,255,255,.8);">Peminjaman Kendaraan</div>
<svg class="abs" style="left:15.8px;top:210.0px" width="12.2" height="10.3" viewBox="0 0 576 512" preserveAspectRatio="none"><path fill="rgba(255,255,255,.32)" d="M570.69,236.27,512,184.44V48a16,16,0,0,0-16-16H432a16,16,0,0,0-16,16V99.67L314.78,10.3C308.5,4.61,296.53,0,288,0s-20.46,4.61-26.74,10.3l-256,226A18.27,18.27,0,0,0,0,248.2a18.64,18.64,0,0,0,4.09,10.71L25.5,282.7a21.14,21.14,0,0,0,12,5.3,21.67,21.67,0,0,0,10.69-4.11l15.9-14V480a32,32,0,0,0,32,32H480a32,32,0,0,0,32-32V269.88l15.91,14A21.94,21.94,0,0,0,538.63,288a20.89,20.89,0,0,0,11.87-5.31l21.41-23.81A21.64,21.64,0,0,0,576,248.19,21,21,0,0,0,570.69,236.27ZM288,176a64,64,0,1,1-64,64A64,64,0,0,1,288,176ZM400,448H176a16,16,0,0,1-16-16,96,96,0,0,1,96-96h64a96,96,0,0,1,96,96A16,16,0,0,1,400,448Z"/></svg>
<div class="t" style="left:35.60px;top:210.00px;font-size:10.9px;letter-spacing:-0.135px;color:rgba(255,255,255,.8);">Peminjaman Ruangan</div>
<svg class="abs" style="left:16.2px;top:246.4px" width="11.3" height="11.43" viewBox="0 0 512 512" preserveAspectRatio="none"><path fill="rgba(255,255,255,.32)" d="M464 32H48C21.49 32 0 53.49 0 80v352c0 26.51 21.49 48 48 48h416c26.51 0 48-21.49 48-48V80c0-26.51-21.49-48-48-48zM224 416H64v-96h160v96zm0-160H64v-96h160v96zm224 160H288v-96h160v96zm0-160H288v-96h160v96z"/></svg>
<div class="t" style="left:35.60px;top:247.00px;font-size:10.9px;letter-spacing:-0.238px;color:rgba(255,255,255,.8);">Pengajuan SPKL</div>
<svg class="abs" style="left:16.2px;top:283.3px" width="11.3" height="11.43" viewBox="0 0 512 512" preserveAspectRatio="none"><path fill="rgba(255,255,255,.32)" d="M464 32H48C21.49 32 0 53.49 0 80v352c0 26.51 21.49 48 48 48h416c26.51 0 48-21.49 48-48V80c0-26.51-21.49-48-48-48zM224 416H64v-96h160v96zm0-160H64v-96h160v96zm224 160H288v-96h160v96zm0-160H288v-96h160v96z"/></svg>
<div class="t" style="left:35.60px;top:284.00px;font-size:10.9px;letter-spacing:-0.157px;color:rgba(255,255,255,.8);">Input SA</div>
<svg class="abs" style="left:16.6px;top:321.5px" width="10.6" height="10.6" viewBox="0 0 512 512" preserveAspectRatio="none"><path fill="rgba(255,255,255,.32)" d="M487.4 315.7l-42.6-24.6c4.3-23.2 4.3-47 0-70.2l42.6-24.6c4.9-2.8 7.1-8.6 5.5-14-11.1-35.6-30-67.8-54.7-94.6-3.8-4.1-10-5.1-14.8-2.3L380.8 110c-17.9-15.4-38.5-27.3-60.8-35.1V25.8c0-5.6-3.9-10.5-9.4-11.7-36.7-8.2-74.3-7.8-109.2 0-5.5 1.2-9.4 6.1-9.4 11.7V75c-22.2 7.9-42.8 19.8-60.8 35.1L88.7 85.5c-4.9-2.8-11-1.9-14.8 2.3-24.7 26.7-43.6 58.9-54.7 94.6-1.7 5.4.6 11.2 5.5 14L67.3 221c-4.3 23.2-4.3 47 0 70.2l-42.6 24.6c-4.9 2.8-7.1 8.6-5.5 14 11.1 35.6 30 67.8 54.7 94.6 3.8 4.1 10 5.1 14.8 2.3l42.6-24.6c17.9 15.4 38.5 27.3 60.8 35.1v49.2c0 5.6 3.9 10.5 9.4 11.7 36.7 8.2 74.3 7.8 109.2 0 5.5-1.2 9.4-6.1 9.4-11.7v-49.2c22.2-7.9 42.8-19.8 60.8-35.1l42.6 24.6c4.9 2.8 11 1.9 14.8-2.3 24.7-26.7 43.6-58.9 54.7-94.6 1.5-5.5-.7-11.3-5.6-14.1zM256 336c-44.1 0-80-35.9-80-80s35.9-80 80-80 80 35.9 80 80-35.9 80-80 80z"/></svg>
<div class="t" style="left:35.60px;top:322.00px;font-size:10.9px;letter-spacing:-0.533px;color:rgba(255,255,255,.8);">Data</div>
<svg class="abs" style="left:15.3px;top:385.0px" width="12.7" height="10.53" viewBox="0 0 576 512" preserveAspectRatio="none"><path fill="rgba(255,255,255,.32)" d="M572.52 241.4C518.29 135.59 410.93 64 288 64S57.68 135.64 3.48 241.41a32.35 32.35 0 0 0 0 29.19C57.71 376.41 165.07 448 288 448s230.32-71.64 284.52-177.41a32.35 32.35 0 0 0 0-29.19zM288 400a144 144 0 1 1 144-144 143.93 143.93 0 0 1-144 144zm0-240a95.31 95.31 0 0 0-25.31 3.79 47.85 47.85 0 0 1-66.9 66.9A95.78 95.78 0 1 0 288 160z"/></svg>
<div class="t" style="left:35.60px;top:385.00px;font-size:10.9px;letter-spacing:0.148px;color:rgba(255,255,255,.8);">Monitoring Approval Ijin</div>
<svg class="abs" style="left:16.2px;top:421.4px" width="11.3" height="11.2" viewBox="0 0 512 512" preserveAspectRatio="none"><path fill="rgba(255,255,255,.32)" d="M502.3 190.8c3.9-3.1 9.7-.2 9.7 4.7V400c0 26.5-21.5 48-48 48H48c-26.5 0-48-21.5-48-48V195.6c0-5 5.7-7.8 9.7-4.7 22.4 17.4 52.1 39.5 154.1 113.6 21.1 15.4 56.7 47.8 92.2 47.6 35.7.3 72-32.8 92.3-47.6 102-74.1 131.6-96.3 154-113.7zM256 320c23.2.4 56.6-29.2 73.4-41.4 132.7-96.3 142.8-104.7 173.4-128.7 5.8-4.5 9.2-11.5 9.2-18.9v-19c0-26.5-21.5-48-48-48H48C21.5 64 0 85.5 0 112v19c0 7.4 3.4 14.3 9.2 18.9 30.6 23.9 40.7 32.4 173.4 128.7 16.8 12.2 50.2 41.8 73.4 41.4z"/></svg>
<div class="t" style="left:35.60px;top:422.00px;font-size:10.9px;letter-spacing:0.085px;color:rgba(255,255,255,.8);">Email Approval</div>
<svg class="abs" style="left:16.2px;top:458.3px" width="11.3" height="11.2" viewBox="0 0 512 512" preserveAspectRatio="none"><path fill="rgba(255,255,255,.32)" d="M502.3 190.8c3.9-3.1 9.7-.2 9.7 4.7V400c0 26.5-21.5 48-48 48H48c-26.5 0-48-21.5-48-48V195.6c0-5 5.7-7.8 9.7-4.7 22.4 17.4 52.1 39.5 154.1 113.6 21.1 15.4 56.7 47.8 92.2 47.6 35.7.3 72-32.8 92.3-47.6 102-74.1 131.6-96.3 154-113.7zM256 320c23.2.4 56.6-29.2 73.4-41.4 132.7-96.3 142.8-104.7 173.4-128.7 5.8-4.5 9.2-11.5 9.2-18.9v-19c0-26.5-21.5-48-48-48H48C21.5 64 0 85.5 0 112v19c0 7.4 3.4 14.3 9.2 18.9 30.6 23.9 40.7 32.4 173.4 128.7 16.8 12.2 50.2 41.8 73.4 41.4z"/></svg>
<div class="t" style="left:35.60px;top:459.00px;font-size:10.9px;letter-spacing:0.087px;color:rgba(255,255,255,.8);">Mail List</div>
<svg class="abs" style="left:15.3px;top:495.9px" width="12.7" height="10.53" viewBox="0 0 576 512" preserveAspectRatio="none"><path fill="rgba(255,255,255,.32)" d="M572.52 241.4C518.29 135.59 410.93 64 288 64S57.68 135.64 3.48 241.41a32.35 32.35 0 0 0 0 29.19C57.71 376.41 165.07 448 288 448s230.32-71.64 284.52-177.41a32.35 32.35 0 0 0 0-29.19zM288 400a144 144 0 1 1 144-144 143.93 143.93 0 0 1-144 144zm0-240a95.31 95.31 0 0 0-25.31 3.79 47.85 47.85 0 0 1-66.9 66.9A95.78 95.78 0 1 0 288 160z"/></svg>
<div class="t" style="left:35.60px;top:496.00px;font-size:10.9px;letter-spacing:-0.100px;color:rgba(255,255,255,.8);">Master Data GA</div>
<svg class="abs" style="left:162.2px;top:320.4px" width="7.4" height="11.8" viewBox="0 0 256 512" preserveAspectRatio="none"><path fill="rgba(255,255,255,.55)" d="M224.3 273l-136 136c-9.400 9.400-24.600 9.400-33.900 0l-22.600-22.600c-9.400-9.400-9.400-24.600 0-33.900l96.400-96.400-96.400-96.400c-9.400-9.400-9.400-24.600 0-33.900L54.300 103c9.400-9.400 24.600-9.400 33.900 0l136 136c9.500 9.400 9.500 24.600.1 34z"/></svg>
<div class="abs" style="left:76px;top:534px;width:32px;height:32px;border-radius:50%;background:rgba(255,255,255,.2)"></div>
<svg class="abs" style="left:86.8px;top:543.4px" width="7.9" height="12.6" viewBox="0 0 256 512" preserveAspectRatio="none"><path fill="rgba(255,255,255,.42)" d="M31.700 239l136-136c9.400-9.400 24.600-9.400 33.900 0l22.600 22.600c9.400 9.400 9.400 24.600 0 33.900L127.900 256l96.400 96.400c9.400 9.400 9.400 24.600 0 33.900L201.700 409c-9.400 9.400-24.600 9.400-33.900 0l-136-136c-9.500-9.400-9.500-24.600-.1-34z"/></svg>
<div class="abs" style="left:15px;top:578px;width:153px;height:60px;border-radius:5px;background:rgba(0,0,0,.1)"></div>
<div class="abs" style="left:68px;top:591px;width:47px;height:25px;border-radius:2.6px;background:#e74a3b"></div>
<div class="t" style="left:75.80px;top:598.00px;font-size:11.2px;letter-spacing:0.320px;color:#fff;">logout</div>

<!-- ======= WINDOW FRAME / SCROLLBAR ======= -->
<div id="frame">
<div class="abs" style="left:1097px;top:2px;width:17px;height:626px;background:#f1f1f1"></div>
<div class="abs" style="left:1097px;top:19px;width:17px;height:256px;background:#c8c8c8"></div>
<svg class="abs" style="left:1097px;top:2px" width="17" height="17" viewBox="0 0 17 17"><path d="M4.2 10.6 L8.5 6.3 L12.8 10.6" fill="none" stroke="#505050" stroke-width="1.9"/></svg>
<div class="abs" style="left:0px;top:0px;width:1116px;height:1px;background:#fff"></div>
<div class="abs" style="left:0px;top:1px;width:1116px;height:1px;background:#b9b9b9"></div>
<div class="abs" style="left:0px;top:0px;width:1px;height:536px;background:#fff"></div>
<div class="abs" style="left:1px;top:1px;width:1px;height:535px;background:#777"></div>
<div class="abs" style="left:0px;top:536px;width:2px;height:92px;background:#0a0a12"></div>
<div class="abs" style="left:0px;top:578px;width:2px;height:2px;background:#ddd"></div>
<div class="abs" style="left:1114px;top:1px;width:1px;height:546px;background:#6a6a6a"></div>
<div class="abs" style="left:1115px;top:0px;width:1px;height:547px;background:#fff"></div>
<div class="abs" style="left:1114px;top:513px;width:2px;height:1px;background:#8a8a8a"></div>
<div class="abs" style="left:1114px;top:537px;width:2px;height:1px;background:#8a8a8a"></div>
<div class="abs" style="left:1114px;top:547px;width:2px;height:81px;background:linear-gradient(180deg,#0b3260,#0a2240)"></div>
</div>

</div>
</body>
</html>
